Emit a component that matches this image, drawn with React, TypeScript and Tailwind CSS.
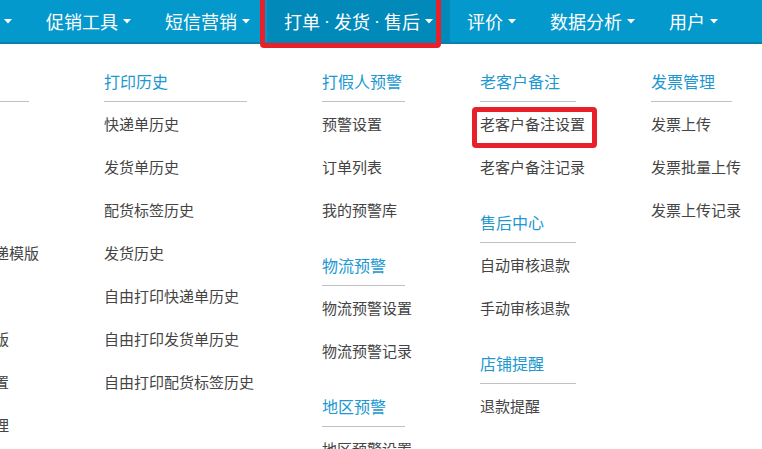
const navItems = [
  { label: "基础设置" },
  { label: "促销工具" },
  { label: "短信营销" },
  { label: "打单 · 发货 · 售后", active: true },
  { label: "评价" },
  { label: "数据分析" },
  { label: "用户" },
];

interface Section {
  title: string;
  links: string[];
}

interface Column {
  width: string;
  sections: Section[];
}

const columns: Column[] = [
  {
    width: "w-[125px]",
    sections: [
      {
        title: "打印模版",
        links: [
          "快递单模版",
          "发货单模版",
          "配货标签模版",
          "自定义打印快递模版",
          "打印设置",
          "发货单打印模版",
          "打印机纸张设置",
          "打印模版库管理",
        ],
      },
    ],
  },
  {
    width: "w-[143px]",
    sections: [
      {
        title: "打印历史",
        links: [
          "快递单历史",
          "发货单历史",
          "配货标签历史",
          "发货历史",
          "自由打印快递单历史",
          "自由打印发货单历史",
          "自由打印配货标签历史",
        ],
      },
    ],
  },
  {
    width: "w-[83px]",
    sections: [
      { title: "打假人预警", links: ["预警设置", "订单列表", "我的预警库"] },
      { title: "物流预警", links: ["物流预警设置", "物流预警记录"] },
      { title: "地区预警", links: ["地区预警设置"] },
    ],
  },
  {
    width: "w-[96px]",
    sections: [
      { title: "老客户备注", links: ["老客户备注设置", "老客户备注记录"] },
      { title: "售后中心", links: ["自动审核退款", "手动审核退款"] },
      { title: "店铺提醒", links: ["退款提醒"] },
    ],
  },
  {
    width: "w-[81px]",
    sections: [
      { title: "发票管理", links: ["发票上传", "发票批量上传", "发票上传记录"] },
    ],
  },
];

const Caret = () => (
  <svg width="8" height="5" viewBox="0 0 8 5" className="shrink-0">
    <path d="M0 0 L8 0 L4 4.5 Z" fill="#ffffff" />
  </svg>
);

// the dot between words is narrow in the original, so draw it in a latin font
const NavLabel = ({ label }: { label: string }) => {
  if (!label.includes("·")) return <span>{label}</span>;
  const parts = label.split(" · ");
  return (
    <span className="flex items-center">
      {parts.map((p, i) => (
        <span key={i} className="flex items-center">
          {i > 0 && (
            <span className="mx-[4px] font-['Liberation_Sans',sans-serif]">·</span>
          )}
          {p}
        </span>
      ))}
    </span>
  );
};

const App = () => {
  return (
    <div className="relative h-[449px] w-[762px] overflow-hidden bg-white font-['Noto_Sans_CJK_SC','Microsoft_YaHei',sans-serif]">
      {/* top navigation */}
      <nav className="flex h-[44px] items-stretch border-b-2 border-[#0a80ab] bg-[#0399cc] ml-[-90px] text-white">
        {navItems.map((item) => (
          <div
            key={item.label}
            className={`flex shrink-0 items-center gap-[5px] px-[17px] text-[18px] whitespace-nowrap ${
              item.active ? "bg-[#0189ba]" : ""
            }`}
          >
            <NavLabel label={item.label} />
            <Caret />
          </div>
        ))}
      </nav>

      {/* mega menu */}
      <div className="flex gap-[75px] ml-[-96px] pt-[25px]">
        {columns.map((col, ci) => (
          <div key={ci} className={`${col.width} shrink-0`}>
            {col.sections.map((sec, si) => (
              <div key={sec.title} className={si > 0 ? "mt-[21px]" : ""}>
                <div className="text-[16px] leading-[24px] text-[#2098cf] whitespace-nowrap">
                  {sec.title}
                </div>
                <div className="mt-[8px] border-t border-[#c2c2c2]" />
                <ul className="pt-[1px]">
                  {sec.links.map((l) => (
                    <li
                      key={l}
                      className="flex h-[43px] items-center text-[15px] text-[#444444] whitespace-nowrap"
                    >
                      {l}
                    </li>
                  ))}
                </ul>
              </div>
            ))}
          </div>
        ))}
      </div>

      {/* annotation boxes */}
      <div className="absolute left-[260px] top-[-6px] h-[54px] w-[181px] rounded-[4px] border-[5px] border-[#e8202a]" />
      <div className="absolute left-[472px] top-[107px] h-[41px] w-[125px] rounded-[4px] border-[5px] border-[#e8202a]" />
    </div>
  );
};

export default App;
